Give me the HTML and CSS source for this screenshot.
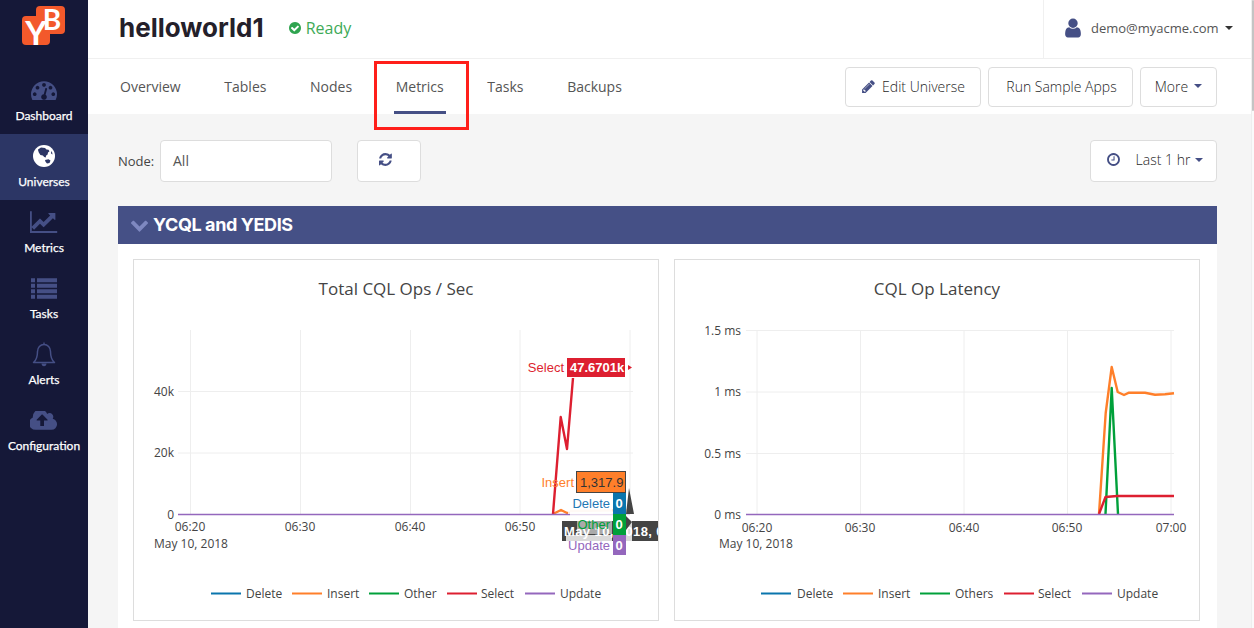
FILE: index.html
```html
<!DOCTYPE html>
<html lang="en">
<head>
<meta charset="utf-8">
<title>helloworld1</title>
<link rel="stylesheet" href="styles.css">
</head>
<body>
<div class="app">
  <aside class="sidebar">
    <div class="logo">
      <svg width="88" height="68" viewBox="0 0 88 68">
        <rect x="36" y="6" width="29" height="28" rx="4" class="logo-bg"/>
        <rect x="22" y="16" width="28" height="29" rx="4" class="logo-bg"/>
        <text x="36" y="45" class="logo-y">Y</text>
        <text x="52" y="30" class="logo-b">B</text>
      </svg>
    </div>
    <a class="side-item">
      <span class="icon-box"><svg class="side-icon" width="26" height="19" viewBox="0 256 1792 1280"><path d="M384 1152q0-53-37.5-90.5t-90.5-37.5-90.5 37.5-37.5 90.5 37.5 90.5 90.5 37.5 90.5-37.5 37.5-90.5zm192-448q0-53-37.5-90.5t-90.5-37.5-90.5 37.5-37.5 90.5 37.5 90.5 90.5 37.5 90.5-37.5 37.5-90.5zm428 481l101-382q6-26-7.5-48.5t-38.5-29.5-48 6.5-30 39.5l-101 382q-60 5-107 43.5t-63 98.5q-20 77 20 146t117 89 146-20 89-117q16-60-6-117t-72-91zm660-33q0-53-37.5-90.5t-90.5-37.5-90.5 37.5-37.5 90.5 37.5 90.5 90.5 37.5 90.5-37.5 37.5-90.5zm-640-640q0-53-37.5-90.5t-90.5-37.5-90.5 37.5-37.5 90.5 37.5 90.5 90.5 37.5 90.5-37.5 37.5-90.5zm448 192q0-53-37.5-90.5t-90.5-37.5-90.5 37.5-37.5 90.5 37.5 90.5 90.5 37.5 90.5-37.5 37.5-90.5zm320 448q0 261-141 483-19 29-54 29h-1402q-35 0-54-29-141-221-141-483 0-182 71-348t191-286 286-191 348-71 348 71 286 191 191 286 71 348z"/></svg></span>
      <span class="side-label">Dashboard</span>
    </a>
    <a class="side-item active">
      <span class="icon-box"><svg class="side-icon" width="24" height="24" viewBox="0 0 24 24">
        <circle cx="12" cy="12" r="11" class="globe-disc"/>
        <path class="globe-land" d="M6 5.5l3-2 4 .5 1.5 1.5 2 .2 1 1.6-1.5 1.2-.4 2-1.6 1.2-.2 1.8-1.6-.4-1.4-1.6-2.4-.6-1.6-2.4-.6-1.8zM13 16l3.500-.8 2 1.300-1 2.500-2.500 .5-1.500-1.800zM19 7l1.200 1.500.3 2-1.300-.7z"/>
      </svg></span>
      <span class="side-label">Universes</span>
    </a>
    <a class="side-item">
      <span class="icon-box"><svg class="side-icon" width="29" height="22" viewBox="0 128 2048 1536"><path d="M1920 1536v128h-1920v-1536h128v1408h1792zm-128-1248v435q0 21-19.500 29.500t-35.500-7.500l-121-121-633 633q-10 10-23 10t-23-10l-233-233-416 416-192-192 585-585q10-10 23-10t23 10l233 233 464-464-121-121q-16-16-7.500-35.500t29.500-19.500h435q14 0 23 9t9 23z"/></svg></span>
      <span class="side-label">Metrics</span>
    </a>
    <a class="side-item">
      <span class="icon-box"><svg class="side-icon" width="26" height="21" viewBox="0 3 26 20.500">
        <path d="M0 3h4v4h-4zM6 3h20v4h-20zM0 8.500h4v4h-4zM6 8.500h20v4h-20zM0 14h4v4h-4zM6 14h20v4h-20zM0 19.500h4v4h-4zM6 19.500h20v4h-20z"/>
      </svg></span>
      <span class="side-label">Tasks</span>
    </a>
    <a class="side-item">
      <span class="icon-box"><svg class="side-icon" width="24" height="26" viewBox="0 0 24 26">
        <path class="bell" d="M1.500 21.500c3-2.500 4-5 4-11 0-4 2.800-7 6.500-7s6.500 3 6.500 7c0 6 1 8.500 4 11z"/>
        <path d="M12 .5l1 3h-2zM9.500 22.500h5c0 1.500-1 2.800-2.500 2.800s-2.500-1.300-2.500-2.800z"/>
      </svg></span>
      <span class="side-label">Alerts</span>
    </a>
    <a class="side-item">
      <span class="icon-box"><svg class="side-icon" width="28" height="19" viewBox="0 256 1920 1280"><path d="M1216 864q0-14-9-23l-352-352q-9-9-23-9t-23 9l-351 351q-10 12-10 24 0 14 9 23t23 9h224v352q0 13 9.500 22.500t22.500 9.500h192q13 0 22.500-9.500t9.500-22.500v-352h224q13 0 22.500-9.500t9.500-22.500zm640 288q0 159-112.500 271.500t-271.500 112.500h-1088q-185 0-316.500-131.500t-131.500-316.500q0-130 70-240t188-165q-2-30-2-43 0-212 150-362t362-150q156 0 285.500 87t188.500 231q71-62 166-62 106 0 181 75t75 181q0 76-41 138 130 31 213.500 135.500t83.500 238.500z"/></svg></span>
      <span class="side-label">Configuration</span>
    </a>
  </aside>

  <main class="main">
    <header class="topbar">
      <div class="title-group">
        <h1 class="title">helloworld1</h1>
        <span class="status">
          <svg width="14" height="14" viewBox="0 0 1792 1792"><path d="M1412 734q0-28-18-46l-91-90q-19-19-45-19t-45 19l-408 407-226-226q-19-19-45-19t-45 19l-91 90q-18 18-18 46 0 27 18 45l362 362q19 19 45 19 27 0 46-19l543-543q18-18 18-45zm252 162q0 209-103 385.500t-279.500 279.500-385.500 103-385.500-103-279.500-279.500-103-385.500 103-385.500 279.500-279.500 385.500-103 385.500 103 279.500 279.500 103 385.500z"/></svg>
          Ready
        </span>
      </div>
      <div class="user">
        <svg class="icon" width="22" height="22" viewBox="0 0 1792 1792"><path d="M1536 1399q0 109-62.500 187t-150.500 78h-854q-88 0-150.500-78t-62.500-187q0-85 8.500-160.500t31.500-152 58.500-131 94-89 134.500-34.500q131 128 313 128t313-128q76 0 134.500 34.500t94 89 58.500 131 31.500 152 8.500 160.500zm-256-887q0 159-112.500 271.500t-271.500 112.500-271.500-112.500-112.500-271.500 112.500-271.500 271.500-112.500 271.500 112.500 112.500 271.500z"/></svg>
        <span class="user-name">demo@myacme.com</span>
        <i class="caret dark"></i>
      </div>
    </header>

    <nav class="tabbar">
      <ul class="tabs">
        <li class="tab">Overview</li>
        <li class="tab">Tables</li>
        <li class="tab">Nodes</li>
        <li class="tab current">Metrics</li>
        <li class="tab">Tasks</li>
        <li class="tab">Backups</li>
      </ul>
      <div class="actions">
        <button class="btn btn-edit">
          <svg class="icon" width="15" height="15" viewBox="0 0 1792 1792"><path d="M491 1536l91-91-235-235-91 91v107h128v128h107zm523-928q0-22-22-22-10 0-17 7l-542 542q-7 7-7 17 0 22 22 22 10 0 17-7l542-542q7-7 7-17zm-54-192l416 416-832 832h-416v-416zm683 96q0 53-37 90l-166 166-416-416 166-165q36-38 90-38 53 0 91 38l235 234q37 39 37 91z"/></svg>
          Edit Universe
        </button>
        <button class="btn btn-run">Run Sample Apps</button>
        <button class="btn btn-more">More <i class="caret"></i></button>
      </div>
      <div class="highlight"></div>
    </nav>

    <section class="content">
      <div class="filters">
        <label class="node-label">Node:</label>
        <div class="node-select">All</div>
        <button class="btn btn-refresh">
          <svg class="icon" width="15" height="15" viewBox="0 0 1792 1792"><path d="M1511 1056q0 5-1 7-64 268-268 434.500t-478 166.500q-146 0-282.500-55t-243.500-157l-129 129q-19 19-45 19t-45-19-19-45v-448q0-26 19-45t45-19h448q26 0 45 19t19 45-19 45l-137 137q71 66 161 102t187 36q134 0 250-65t186-179q11-17 53-117 8-23 30-23h192q13 0 22.500 9.500t9.500 22.500zm25-800v448q0 26-19 45t-45 19h-448q-26 0-45-19t-19-45 19-45l138-138q-148-137-349-137-134 0-250 65t-186 179q-11 17-53 117-8 23-30 23h-199q-13 0-22.500-9.500t-9.500-22.500v-7q65-268 270-434.500t480-166.500q146 0 284 55.500t245 156.500l130-129q19-19 45-19t45 19 19 45z"/></svg>
        </button>
        <button class="btn btn-time">
          <svg class="icon" width="15" height="15" viewBox="0 0 1792 1792"><path d="M1024 544v448q0 14-9 23t-23 9h-320q-14 0-23-9t-9-23v-64q0-14 9-23t23-9h224v-352q0-14 9-23t23-9h64q14 0 23 9t9 23zm416 352q0-148-73-273t-198-198-273-73-273 73-198 198-73 273 73 273 198 198 273 73 273-73 198-198 73-273zm224 0q0 209-103 385.500t-279.500 279.500-385.500 103-385.500-103-279.500-279.500-103-385.500 103-385.500 279.500-279.500 385.500-103 385.500 103 279.500 279.500 103 385.500z"/></svg>
          <span class="time-text">Last 1 hr</span> <i class="caret"></i>
        </button>
      </div>

      <div class="panel">
        <div class="panel-head">
          <svg class="chevron" width="19" height="19" viewBox="0 0 1792 1792"><path d="M1683 808l-742 741q-19 19-45 19t-45-19l-742-741q-19-19-19-45.500t19-45.500l166-165q19-19 45-19t45 19l531 531 531-531q19-19 45-19t45 19l166 165q19 19 19 45.500t-19 45.500z"/></svg>
          <h2 class="panel-title">YCQL and YEDIS</h2>
        </div>
        <div class="panel-body">
          <figure class="chart">
            <svg width="524" height="360" viewBox="134 260 524 360">
              <text x="396" y="295" class="chart-title">Total CQL Ops / Sec</text>
              <g class="grid">
                <path d="M190.500 330V514M300.500 330V514M410.500 330V514M520 330V514M630 330V514M178 391.500H633M178 453H633"/>
              </g>
              <text x="174" y="396" class="tick end">40k</text>
              <text x="174" y="457" class="tick end">20k</text>
              <text x="174" y="519" class="tick end">0</text>
              <text x="190" y="531" class="tick mid">06:20</text>
              <text x="191" y="548" class="tick mid">May 10, 2018</text>
              <text x="300" y="531" class="tick mid">06:30</text>
              <text x="410" y="531" class="tick mid">06:40</text>
              <text x="520" y="531" class="tick mid">06:50</text>

              <path class="line insert" d="M553 514L561 510L567 513L570 513"/>
              <path class="line select" d="M553 514L560.700 417L567 449L573 378"/>
              <path class="line update" d="M178 514.500H570"/>
              <path class="line insert faint" d="M570 511L630 510"/>
              <path class="line update faint" d="M570 514.500H630"/>

              <rect x="562" y="521" width="96" height="20" class="hover-date"/>
              <text x="564" y="536" class="hover-date-text">May 10, 2018, 0</text>
              <rect x="577" y="516" width="35" height="18" class="label-wash soft"/>
              <rect x="566" y="535" width="46" height="20" class="label-wash"/>
              <rect x="568" y="494" width="44" height="20" class="label-wash"/>
              <rect x="626" y="521" width="6" height="20" class="label-wash"/>
              <path class="hover-arrow" d="M629 488L634 514L626 514zM626 516L632 522L626 530z"/>

              <text x="564" y="372" class="flag-name c-select">Select</text>
              <rect x="567" y="358" width="58" height="19" class="bg-select"/>
              <path class="bg-select" d="M628 365L632 367.500L628 370z"/>
              <text x="570" y="372" class="flag-val">47.6701k</text>

              <text x="574" y="487" class="flag-name c-insert">Insert</text>
              <rect x="576.500" y="471.500" width="49" height="21" class="bg-insert"/>
              <text x="580" y="487" class="flag-val dark">1,317.9</text>

              <text x="610" y="508" class="flag-name c-delete">Delete</text>
              <rect x="613" y="493" width="13" height="21" class="bg-delete"/>
              <text x="615.500" y="508" class="flag-val">0</text>

              <text x="610" y="529" class="flag-name c-other">Other</text>
              <rect x="613" y="514" width="13" height="21" class="bg-other"/>
              <text x="615.500" y="529" class="flag-val">0</text>

              <text x="610" y="550" class="flag-name c-update">Update</text>
              <rect x="613" y="535" width="13" height="20" class="bg-update"/>
              <text x="615.500" y="550" class="flag-val">0</text>

              <g class="legend">
                <path class="key c-delete-s" d="M211 593.500H241"/><text x="246" y="598">Delete</text>
                <path class="key c-insert-s" d="M292 593.500H322"/><text x="327" y="598">Insert</text>
                <path class="key c-other-s" d="M369 593.500H399"/><text x="404" y="598">Other</text>
                <path class="key c-select-s" d="M447 593.500H477"/><text x="481" y="598">Select</text>
                <path class="key c-update-s" d="M525 593.500H555"/><text x="560" y="598">Update</text>
              </g>
            </svg>
          </figure>

          <figure class="chart">
            <svg width="524" height="360" viewBox="675 260 524 360">
              <text x="937" y="295" class="chart-title">CQL Op Latency</text>
              <g class="grid">
                <path d="M757 330V514M860.500 330V514M964 330V514M1067.500 330V514M1171 330V514M746 330.500H1174M746 392H1174M746 453.500H1174"/>
              </g>
              <text x="741" y="335" class="tick end">1.5 ms</text>
              <text x="741" y="396" class="tick end">1 ms</text>
              <text x="741" y="458" class="tick end">0.5 ms</text>
              <text x="741" y="519" class="tick end">0 ms</text>
              <text x="757" y="532" class="tick mid">06:20</text>
              <text x="756" y="548" class="tick mid">May 10, 2018</text>
              <text x="860" y="532" class="tick mid">06:30</text>
              <text x="964" y="532" class="tick mid">06:40</text>
              <text x="1067" y="532" class="tick mid">06:50</text>
              <text x="1171" y="532" class="tick mid">07:00</text>

              <path class="line insert" d="M1099 514L1105.700 413L1111.700 367L1117.700 392L1124 395L1129 392.700L1145 392.700L1155 394.700L1165 394.300L1174 393.300"/>
              <path class="line other" d="M1105.500 514L1111.700 388L1118 514"/>
              <path class="line select" d="M1099 514L1105.500 497L1117 496L1174 496"/>
              <path class="line update" d="M746 514.500H1174"/>

              <g class="legend">
                <path class="key c-delete-s" d="M761 593.500H791"/><text x="797" y="598">Delete</text>
                <path class="key c-insert-s" d="M843 593.500H873"/><text x="878" y="598">Insert</text>
                <path class="key c-other-s" d="M920 593.500H950"/><text x="955" y="598">Others</text>
                <path class="key c-select-s" d="M1004 593.500H1034"/><text x="1038" y="598">Select</text>
                <path class="key c-update-s" d="M1082 593.500H1112"/><text x="1117" y="598">Update</text>
              </g>
            </svg>
          </figure>
        </div>
      </div>
    </section>
  </main>
  <div class="scrollbar"><div class="thumb"></div></div>
</div>
</body>
</html>
```
FILE: styles.css
```css
* { box-sizing: border-box; }
html, body { margin: 0; height: 100%; overflow: hidden; }
body { font-family: "Open Sans", "Liberation Sans", sans-serif; font-size: 14px; color: #444; background: #fff; }
.app { display: flex; height: 628px; overflow: hidden; }

.sidebar { width: 88px; flex: none; background: #151838; display: flex; flex-direction: column; }
.logo { height: 68px; }
.logo svg { display: block; }
.logo-bg { fill: #f3592b; }
.logo-y, .logo-b { fill: #fff; font-family: "Lato", sans-serif; font-weight: 700; text-anchor: middle; }
.logo-y { font-size: 33px; }
.logo-b { font-size: 28px; }
.side-item { height: 66px; display: flex; flex-direction: column; align-items: center; padding-top: 9px; color: #fff; }
.icon-box { height: 26px; display: flex; align-items: center; justify-content: center; }
.side-label { margin-top: 5px; line-height: 16px; font-family: "Lato", sans-serif; font-size: 12px; font-weight: 400; -webkit-text-stroke: .25px #fff; }
.side-icon { fill: #454f85; display: block; }
.side-item.active { background: #2c3665; }
.globe-disc { fill: #fff; }
.globe-land { fill: #2c3665; }
.bell { fill: none; stroke: #454f85; stroke-width: 1.5; stroke-linejoin: round; }

.main { flex: 1; min-width: 0; display: flex; flex-direction: column; }
.topbar { height: 59px; flex: none; display: flex; justify-content: space-between; border-bottom: 1px solid #f0f0f0; background: #fff; }
.title-group { display: flex; align-items: center; padding: 0 0 3px 31px; }
.title { margin: 0; font-family: "Inter", sans-serif; font-size: 26px; font-weight: 700; color: #24202a; letter-spacing: 0; line-height: 54px; }
.status { display: flex; align-items: center; gap: 4px; margin-left: 24px; color: #3eaa57; font-size: 16px; }
.status svg { fill: #2fa44f; }
.user { width: 208px; display: flex; align-items: center; padding: 0 0 2px 18px; border-left: 1px solid #f0f0f0; }
.user-name { margin-left: 7px; font-size: 13px; color: #555; }
.icon { fill: #454f85; flex: none; }
.caret { display: inline-block; width: 0; height: 0; margin-left: 2px; vertical-align: middle; border-top: 4px solid #454f85; border-left: 4px solid transparent; border-right: 4px solid transparent; }
.caret.dark { border-top-color: #333; margin-left: 6px; }

.tabbar { position: relative; height: 55px; flex: none; display: flex; justify-content: space-between; background: #fff; padding-right: 34px; }
.tabs { list-style: none; margin: 0; padding: 0 0 0 30px; display: flex; gap: 39.6px; }
.tab { position: relative; height: 55px; line-height: 55px; padding: 0 2px; font-size: 14px; color: #555; }
.tab.current::after { content: ""; position: absolute; left: 0; right: 0; bottom: 0; height: 3px; background: #454f85; }
.actions { display: flex; gap: 7px; padding-top: 8px; }
.btn { height: 40px; background: #fff; border: 1px solid #ddd; border-radius: 4px; font-family: inherit; font-size: 14px; font-weight: 300; color: #1f1f1f; display: flex; align-items: center; justify-content: center; padding: 0 0 2px; }
.btn-edit { width: 136px; gap: 6px; }
.btn-run { width: 145px; padding-left: 2px; }
.btn-more { width: 77px; gap: 4px; }
.highlight { position: absolute; left: 286px; top: 2px; width: 95px; height: 69px; border: 3px solid #ff1f1a; }

.content { flex: 1; min-height: 0; background: #f5f5f5; padding: 26px 34px 0 30px; }
.filters { display: flex; align-items: center; height: 42px; }
.node-label { width: 42px; font-size: 13px; color: #444; }
.node-select { width: 172px; height: 42px; line-height: 40px; padding-left: 12px; background: #fff; border: 1px solid #ddd; border-radius: 4px; font-size: 14px; color: #555; }
.btn-refresh { width: 64px; height: 42px; margin-left: 25px; padding: 0 6px 4px 0; }
.btn-time { width: 127px; height: 42px; margin-left: auto; gap: 3px; padding: 0 0 3px 2px; }
.btn-time .icon { margin-right: 12px; }
.panel { margin-top: 24px; background: #fff; }
.panel-head { height: 38px; background: #455086; display: flex; align-items: center; padding: 0 0 2px 12px; gap: 4px; }
.chevron { fill: #7e88c0; }
.panel-title { margin: 0; font-family: "Inter", sans-serif; font-size: 18px; font-weight: 700; letter-spacing: -0.4px; color: #fff; }
.panel-body { display: flex; gap: 15px; padding: 15px 17px 15px 15px; height: 400px; }
.chart { margin: 0; width: 526px; height: 362px; border: 1px solid #ddd; background: #fff; flex: none; }
.chart svg { display: block; }
.chart-title { font-size: 17px; fill: #444; text-anchor: middle; }
.grid path { fill: none; stroke: #eee; stroke-width: 1; }
.tick { font-size: 12px; fill: #444; }
.end { text-anchor: end; }
.mid { text-anchor: middle; }
.line { fill: none; stroke-width: 2.4; stroke-linejoin: round; }
.line.insert { stroke: #ff7f2a; }
.line.select { stroke: #dd1f30; }
.line.other { stroke: #00a03a; }
.line.update { stroke: #9467bd; stroke-width: 1.5; }
.line.faint { opacity: .25; }
.flag-name { font-family: "Liberation Sans", Arial, sans-serif; font-size: 13px; text-anchor: end; }
.flag-val { font-family: "Liberation Sans", Arial, sans-serif; font-size: 13px; font-weight: 700; fill: #fff; }
.flag-val.dark { fill: #333; font-weight: 400; }
.c-select { fill: #dd1f30; }
.c-insert { fill: #ff7f2a; }
.c-delete { fill: #1f77b4; }
.c-other { fill: #00a03a; }
.c-update { fill: #9467bd; }
.bg-select { fill: #dd1f30; }
.bg-insert { fill: #ff7f2a; stroke: #444; stroke-width: 1; }
.bg-delete { fill: #0a75ad; }
.bg-other { fill: #00a03a; }
.bg-update { fill: #9467bd; }
.hover-date { fill: #444; }
.hover-date-text { font-family: "Liberation Sans", Arial, sans-serif; font-size: 13px; font-weight: 700; letter-spacing: .4px; fill: #fff; }
.label-wash { fill: #fff; opacity: .8; }
.label-wash.soft { opacity: .55; }
.hover-arrow { fill: #444; }
.legend text { font-size: 12px; fill: #444; }
.key { fill: none; stroke-width: 2; }
.c-delete-s { stroke: #0a75ad; }
.c-insert-s { stroke: #ff7f2a; }
.c-other-s { stroke: #00a03a; }
.c-select-s { stroke: #dd1f30; }
.c-update-s { stroke: #9467bd; }

.scrollbar { width: 3px; flex: none; background: #fafafa; border-left: 1px solid #eee; }
.thumb { height: 111px; background: #c4c4c4; border-radius: 2px; }
```
